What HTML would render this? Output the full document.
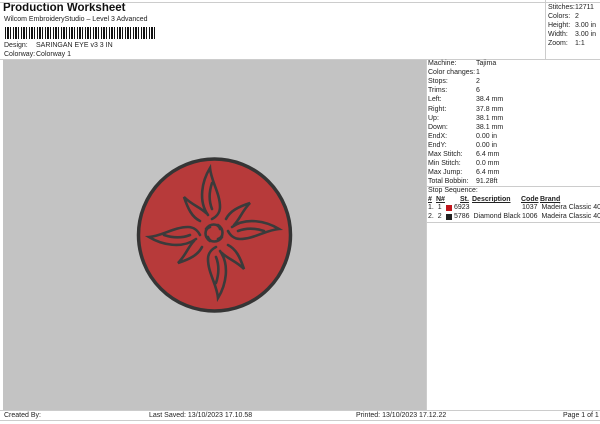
<!DOCTYPE html>
<html><head><meta charset="utf-8"><style>
*{margin:0;padding:0;box-sizing:border-box}
body{width:600px;height:424px;background:#fff;font-family:"Liberation Sans",sans-serif;color:#222;position:relative;overflow:hidden;font-size:7px}
.a{position:absolute;white-space:nowrap}
.bc{position:absolute;left:5px;top:27px;width:152px;height:12px;background:repeating-linear-gradient(90deg,#111 0 1px,#fff 1px 2px,#111 2px 4px,#fff 4px 5px,#111 5px 6px,#fff 6px 8px)}
table{border-collapse:collapse}
td{padding:0;height:9.1px;font-size:7px;line-height:9px}
</style></head><body>
<div class="a" style="left:3px;top:2px;font-size:11.5px;font-weight:bold;color:#111">Production Worksheet</div>
<div class="a" style="left:4px;top:16px">Wilcom EmbroideryStudio – Level 3 Advanced</div>
<div class="bc"></div>
<div class="a" style="left:4px;top:42px">Design:</div><div class="a" style="left:36px;top:42px">SARINGAN EYE v3 3 IN</div>
<div class="a" style="left:4px;top:51px">Colorway:</div><div class="a" style="left:36px;top:51px">Colorway 1</div>
<div class="a" style="left:0;top:2px;width:600px;height:1px;background:#ccc"></div>
<div class="a" style="left:545px;top:0;width:1px;height:60px;background:#ccc"></div>
<table class="a" style="left:548px;top:3px"><tr><td style="width:27px">Stitches:</td><td>12711</td></tr><tr><td>Colors:</td><td>2</td></tr><tr><td>Height:</td><td>3.00 in</td></tr><tr><td>Width:</td><td>3.00 in</td></tr><tr><td>Zoom:</td><td>1:1</td></tr></table>
<div class="a" style="left:0;top:59px;width:600px;height:1px;background:#ccc"></div>
<div class="a" style="left:3px;top:60px;width:423px;height:350px;background:#c3c3c3"></div>
<div class="a" style="left:426px;top:60px;width:1px;height:350px;background:#ccc"></div>
<table class="a" style="left:428px;top:59px"><tr><td style="width:48px">Machine:</td><td>Tajima</td></tr><tr><td>Color changes:</td><td>1</td></tr><tr><td>Stops:</td><td>2</td></tr><tr><td>Trims:</td><td>6</td></tr><tr><td>Left:</td><td>38.4 mm</td></tr><tr><td>Right:</td><td>37.8 mm</td></tr><tr><td>Up:</td><td>38.1 mm</td></tr><tr><td>Down:</td><td>38.1 mm</td></tr><tr><td>EndX:</td><td>0.00 in</td></tr><tr><td>EndY:</td><td>0.00 in</td></tr><tr><td>Max Stitch:</td><td>6.4 mm</td></tr><tr><td>Min Stitch:</td><td>0.0 mm</td></tr><tr><td>Max Jump:</td><td>6.4 mm</td></tr><tr><td>Total Bobbin:</td><td>91.28ft</td></tr></table>
<div class="a" style="left:427px;top:186px;width:173px;height:1px;background:#ccc"></div>
<div class="a" style="left:428px;top:187px">Stop Sequence:</div>
<div class="a" style="left:428px;top:196px;font-weight:bold;text-decoration:underline">#</div>
<div class="a" style="left:436px;top:196px;font-weight:bold;text-decoration:underline">N#</div>
<div class="a" style="left:460px;top:196px;font-weight:bold;text-decoration:underline">St.</div>
<div class="a" style="left:472px;top:196px;font-weight:bold;text-decoration:underline">Description</div>
<div class="a" style="left:521px;top:196px;font-weight:bold;text-decoration:underline">Code</div>
<div class="a" style="left:540px;top:196px;font-weight:bold;text-decoration:underline">Brand</div>
<div class="a" style="left:428px;top:204px">1.&nbsp; 1</div><div class="a" style="left:446px;top:205px;width:6px;height:6px;background:#c0161c"></div><div class="a" style="left:454px;top:204px">6923</div><div class="a" style="left:522px;top:204px">1037&nbsp; Madeira Classic 40</div>
<div class="a" style="left:428px;top:213px">2.&nbsp; 2</div><div class="a" style="left:446px;top:214px;width:6px;height:6px;background:#222"></div><div class="a" style="left:454px;top:213px">5786&nbsp; Diamond Black</div><div class="a" style="left:522px;top:213px">1006&nbsp; Madeira Classic 40</div>
<div class="a" style="left:427px;top:222px;width:173px;height:1px;background:#ccc"></div>
<div class="a" style="left:0;top:410px;width:600px;height:1px;background:#ccc"></div>
<div class="a" style="left:0;top:420px;width:600px;height:1px;background:#ccc"></div>
<div class="a" style="left:4px;top:412px">Created By:</div>
<div class="a" style="left:149px;top:412px">Last Saved: 13/10/2023 17.10.58</div>
<div class="a" style="left:356px;top:412px">Printed: 13/10/2023 17.12.22</div>
<div class="a" style="left:563px;top:412px">Page 1 of 1</div>
<svg class="a" style="left:0;top:0" width="600" height="424">
<circle cx="214.5" cy="235" r="76" fill="#b73a3a" stroke="#353535" stroke-width="3.5"/>
<g transform="translate(214,233)" fill="none" stroke="#3b3b3b" stroke-width="2.6" stroke-linecap="round">
<g id="arm">
<path d="M-6,-18 C-16,-32 -12,-52 -4,-65 C-3,-52 6,-40 6,-26 C6,-20 2,-16 -2,-14"/>
<path d="M-2,-24 C-6,-34 -4,-44 -2,-50"/>
<path d="M-14,-12 C-22,-16 -26,-24 -30,-36 C-22,-28 -14,-26 -8,-20"/>
<path d="M-8,-4 C-4,-10 4,-10 6,-4"/>
</g>
<use href="#arm" transform="rotate(90)"/>
<use href="#arm" transform="rotate(180)"/>
<use href="#arm" transform="rotate(270)"/>
</g>
</svg>
</body></html>
